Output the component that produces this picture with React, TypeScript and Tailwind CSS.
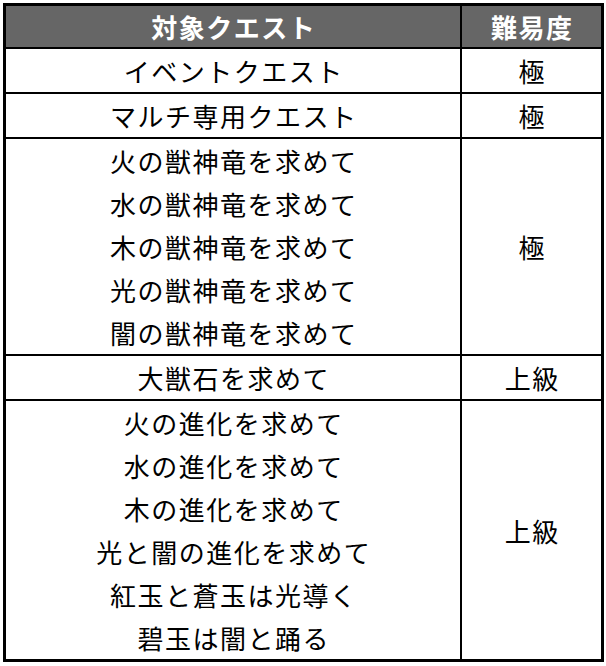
const rows: { quests: string[]; level: string }[] = [
  { quests: ["イベントクエスト"], level: "極" },
  { quests: ["マルチ専用クエスト"], level: "極" },
  {
    quests: [
      "火の獣神竜を求めて",
      "水の獣神竜を求めて",
      "木の獣神竜を求めて",
      "光の獣神竜を求めて",
      "闇の獣神竜を求めて",
    ],
    level: "極",
  },
  { quests: ["大獣石を求めて"], level: "上級" },
  {
    quests: [
      "火の進化を求めて",
      "水の進化を求めて",
      "木の進化を求めて",
      "光と闇の進化を求めて",
      "紅玉と蒼玉は光導く",
      "碧玉は闇と踊る",
    ],
    level: "上級",
  },
];

export default function App() {
  return (
    <div className="w-[606px] h-[666px] bg-white p-[3px] font-['Noto_Sans_CJK_JP','Noto_Sans',sans-serif]">
      <table className="w-[601px] border-collapse border-[3px] border-black text-[26px] tracking-[1.5px] text-black">
        <thead>
          <tr className="bg-[#666666] text-white">
            <th className="w-[456px] h-[41px] border-2 border-black p-0 pl-[2px] font-semibold leading-[41px]">
              対象クエスト
            </th>
            <th className="border-2 border-black p-0 pl-[2px] font-semibold leading-[41px]">
              難易度
            </th>
          </tr>
        </thead>
        <tbody>
          {rows.map((row, i) => (
            <tr key={i}>
              <td className="border-2 border-black p-0 pl-[2px] text-center align-middle font-normal">
                {row.quests.map((q) => (
                  <div key={q} className="leading-[43px]">
                    {q}
                  </div>
                ))}
              </td>
              <td className="border-2 border-black p-0 pl-[2px] text-center align-middle leading-[43px] font-normal">
                {row.level}
              </td>
            </tr>
          ))}
        </tbody>
      </table>
    </div>
  );
}
